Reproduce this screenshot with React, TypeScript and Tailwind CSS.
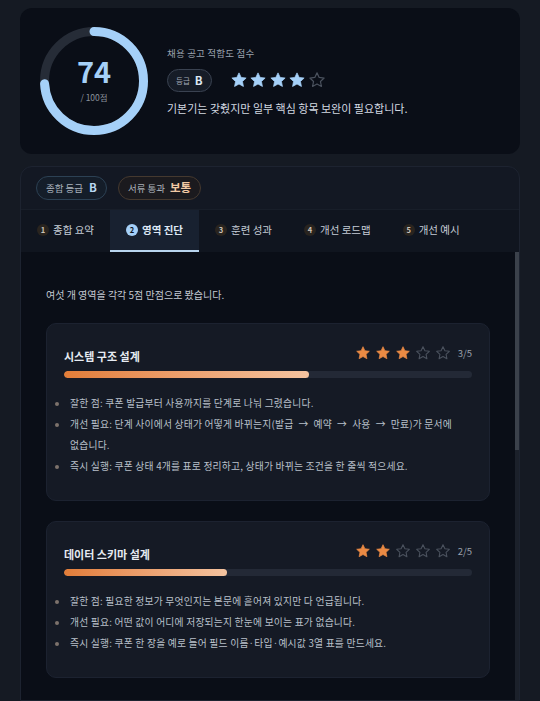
import React from "react";

const FONT = { fontFamily: '"Noto Sans CJK KR", "Noto Sans", sans-serif' };

// en spaces around the arrows: the reference sets them a little wider apart
const AREAS = [
  {
    title: "시스템 구조 설계",
    score: 3,
    notes: [
      "잘한 점: 쿠폰 발급부터 사용까지를 단계로 나눠 그렸습니다.",
      "개선 필요: 단계 사이에서 상태가 어떻게 바뀌는지(발급\u2002→\u2002예약\u2002→\u2002사용\u2002→\u2002만료)가 문서에 없습니다.",
      "즉시 실행: 쿠폰 상태 4개를 표로 정리하고, 상태가 바뀌는 조건을 한 줄씩 적으세요.",
    ],
  },
  {
    title: "데이터 스키마 설계",
    score: 2,
    notes: [
      "잘한 점: 필요한 정보가 무엇인지는 본문에 흩어져 있지만 다 언급됩니다.",
      "개선 필요: 어떤 값이 어디에 저장되는지 한눈에 보이는 표가 없습니다.",
      "즉시 실행: 쿠폰 한 장을 예로 들어 필드 이름·타입·예시값 3열 표를 만드세요.",
    ],
  },
];

const TABS = ["종합 요약", "영역 진단", "훈련 성과", "개선 로드맵", "개선 예시"];

function Star({ filled, color, size }: { filled: boolean; color: string; size: number }) {
  return (
    <svg width={size} height={size} viewBox="0 0 24 24">
      <path
        d="M12 2.5l2.9 6.1 6.6.8-4.9 4.6 1.3 6.6L12 17.3l-5.9 3.3 1.3-6.6-4.9-4.6 6.6-.8z"
        fill={filled ? color : "none"}
        stroke={filled ? color : "#4a515d"}
        strokeWidth={filled ? 1 : 1.6}
        strokeLinejoin="round"
      />
    </svg>
  );
}

function ScoreRing({ value }: { value: number }) {
  const r = 49.5;
  const c = 2 * Math.PI * r;
  return (
    <div className="relative w-[108px] h-[108px] shrink-0">
      <svg width="108" height="108" viewBox="0 0 108 108" className="-rotate-90">
        <circle cx="54" cy="54" r={r} fill="none" stroke="#262c37" strokeWidth="9" />
        <circle
          cx="54"
          cy="54"
          r={r}
          fill="none"
          stroke="#a5d0f8"
          strokeWidth="9"
          strokeLinecap="round"
          strokeDasharray={`${(c * value) / 100} ${c}`}
        />
      </svg>
      <div className="absolute inset-0 flex flex-col items-center justify-center">
        <span className="text-[29px] leading-none font-bold text-[#a5d0f8] mt-[-2px]">{value}</span>
        <span className="text-[8.5px] text-[#8b929d] mt-[6px]">/ 100점</span>
      </div>
    </div>
  );
}

function AreaCard({ area }: { area: (typeof AREAS)[number] }) {
  return (
    <div className="rounded-[10px] bg-[#151a25] border border-[#1c2230] px-[17px] pt-[21px] pb-[23px]">
      <div className="flex items-end justify-between">
        <span className="text-[11px] font-bold text-[#e6ebf2] leading-none mb-[-1px]">{area.title}</span>
        <div className="flex items-center gap-[4px]">
          {[1, 2, 3, 4, 5].map((i) => (
            <Star key={i} filled={i <= area.score} color="#ea8a44" size={16} />
          ))}
          <span className="text-[9.5px] text-[#9aa1ac] ml-[3px]">{area.score}/5</span>
        </div>
      </div>
      <div className="mt-[10px] h-[7px] rounded-full bg-[#232936] overflow-hidden">
        <div
          className="h-full rounded-full bg-gradient-to-r from-[#e27d38] to-[#f4c39f]"
          style={{ width: `${(area.score / 5) * 100}%` }}
        />
      </div>
      <ul className="mt-[15px] -ml-[9px] flex flex-col">
        {area.notes.map((n, i) => (
          <li key={i} className="flex gap-[11px] text-[9.8px] tracking-[0.02em] leading-[21px] text-[#b9c0ca]">
            <span className="mt-[9px] w-[4px] h-[4px] rounded-full bg-[#7d726c] shrink-0" />
            <span className="max-w-[402px] break-keep">{n}</span>
          </li>
        ))}
      </ul>
    </div>
  );
}

export default function App() {
  return (
    <div style={FONT} className="h-[701px] overflow-hidden bg-[#151a23] px-[20px] pt-[8px] flex flex-col gap-[12px]">
      <div className="rounded-[12px] bg-[#0a0e17] h-[146px] flex items-center pl-[20px] gap-[19px]">
        <ScoreRing value={74} />
        <div className="flex flex-col">
          <span className="text-[9.5px] tracking-[0.02em] text-[#9aa2ae]">채용 공고 적합도 점수</span>
          <div className="flex items-center gap-[18px] mt-[9px]">
            <span className="flex items-center gap-[5px] h-[23px] px-[8px] rounded-full border border-[#3a4251] bg-[#161c27]">
              <span className="text-[7.5px] text-[#a3abb6]">등급</span>
              <span className="text-[11.5px] font-bold text-[#dce6f2]">B</span>
            </span>
            <div className="flex items-center gap-[1.5px]">
              {[1, 2, 3, 4, 5].map((i) => (
                <Star key={i} filled={i <= 4} color="#a5d0f8" size={18} />
              ))}
            </div>
          </div>
          <span className="text-[11px] text-[#d3d9e1] mt-[8px]">기본기는 갖췄지만 일부 핵심 항목 보완이 필요합니다.</span>
        </div>
      </div>

      <div className="flex-1 min-h-0 rounded-t-[12px] border border-[#1d2330] bg-[#131823] flex flex-col">
        <div className="flex items-center gap-[11px] px-[15px] pt-[9px] pb-[9px]">
          <span className="flex items-center gap-[6px] h-[24px] px-[9px] rounded-full border border-[#2c4154] bg-[#141d29]">
            <span className="text-[9.5px] text-[#aab3be]">종합 등급</span>
            <span className="text-[11.5px] font-bold text-[#b8d6f2]">B</span>
          </span>
          <span className="flex items-center gap-[5px] h-[24px] px-[9px] rounded-full border border-[#45392f] bg-[#1b1a1e]">
            <span className="text-[9.5px] text-[#aab0b8]">서류 통과</span>
            <span className="text-[11.5px] font-bold text-[#f1c9a4]">보통</span>
          </span>
        </div>
        <div className="flex bg-[#10151f] border-t border-[#181e29]">
          {TABS.map((t, i) => {
            const active = i === 1;
            return (
              <div
                key={t}
                className={
                  active
                    ? "flex items-center gap-[4px] px-[16px] h-[42px] bg-[#182130] border-b-2 border-[#b8d4ee]"
                    : "flex items-center gap-[4px] px-[16px] h-[42px] border-b-2 border-transparent"
                }
              >
                <span
                  className={
                    active
                      ? "w-[12px] h-[12px] rounded-full bg-[#a5d0f8] text-[#0b1220] text-[7.5px] font-bold flex items-center justify-center"
                      : "w-[12px] h-[12px] rounded-full bg-[#29241f] text-[#cbc3bb] text-[7.5px] font-bold flex items-center justify-center"
                  }
                >
                  {i + 1}
                </span>
                <span
                  className={
                    active ? "text-[10.5px] font-bold text-[#dce7f4]" : "text-[10.5px] text-[#c5ccd6]"
                  }
                >
                  {t}
                </span>
              </div>
            );
          })}
        </div>
        <div className="flex-1 min-h-0 flex">
          <div className="flex-1 bg-[#0a0e17] px-[25px] pt-[33px] flex flex-col overflow-hidden">
            <p className="text-[10px] leading-[20px] text-[#c3c9d2]">여섯 개 영역을 각각 5점 만점으로 봤습니다.</p>
            <div className="mt-[18px] flex flex-col gap-[20px]">
              {AREAS.map((a) => (
                <AreaCard key={a.title} area={a} />
              ))}
            </div>
          </div>
          <div className="w-[4px] bg-[#1b202a]">
            <div className="h-[198px] bg-[#3b414b]" />
          </div>
        </div>
      </div>
    </div>
  );
}
